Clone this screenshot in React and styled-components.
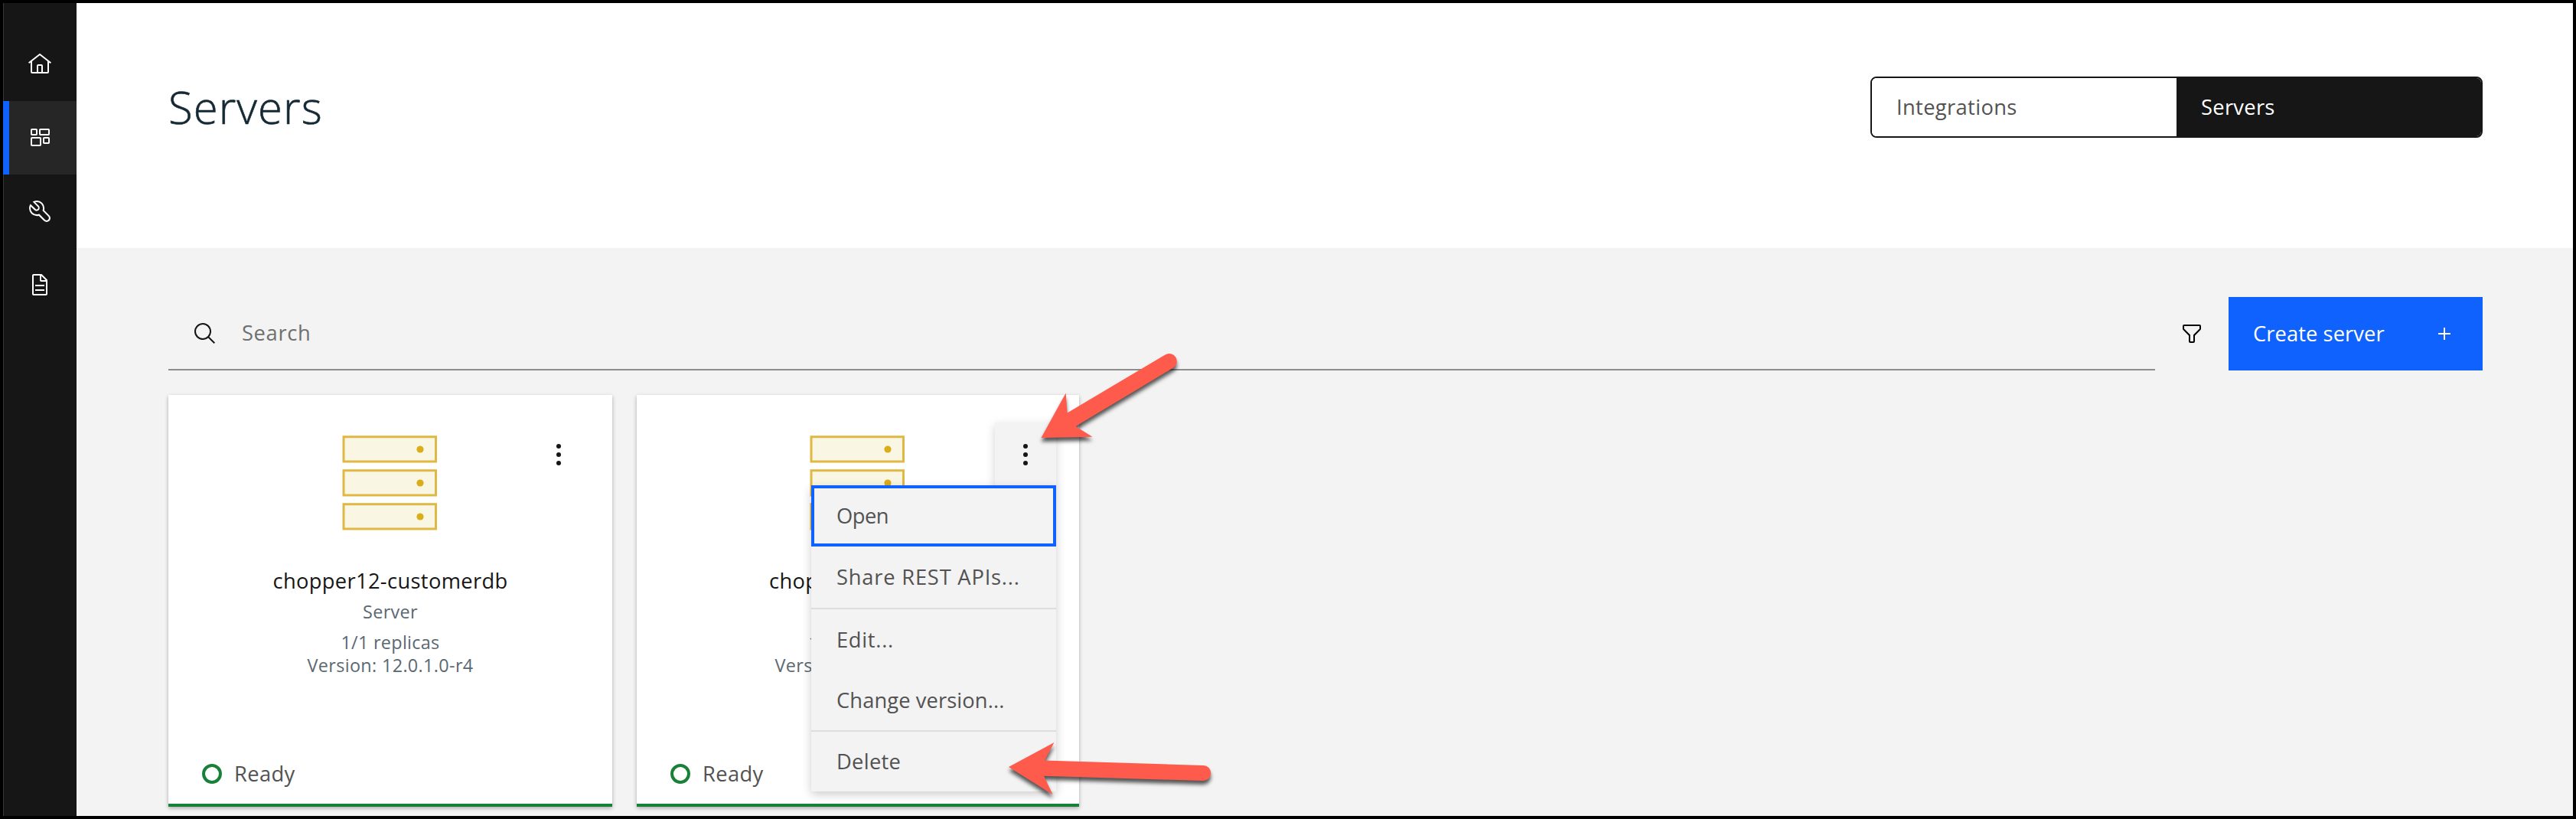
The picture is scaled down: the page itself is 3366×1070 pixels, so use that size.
import React from "react";
import styled, { createGlobalStyle, css } from "styled-components";

const GlobalStyle = createGlobalStyle`
  *, *::before, *::after { box-sizing: border-box; }
  body { margin: 0; background: #000; }
  button { border: 0; margin: 0; padding: 0; background: none; font: inherit; text-align: left; }
`;

/* Shell */

const Frame = styled.div`
  position: relative;
  display: flex;
  width: 3366px;
  height: 1070px;
  border: 4px solid #000;
  overflow: hidden;
  background: #f3f3f3;
  color: #161616;
  font-family: "Open Sans", "Noto Sans", sans-serif;
  font-size: 27.3px;
  line-height: 36px;
`;

const Sidebar = styled.nav`
  flex: none;
  width: 96px;
  padding-top: 32px;
  background: #161616;
  box-shadow: inset 1px 0 0 #393939;
`;

const SidebarItem = styled.a`
  display: flex;
  align-items: center;
  justify-content: center;
  height: 96px;
  color: #fff;
  ${(p) =>
    p.$active &&
    css`
      background: #262626;
      box-shadow: inset 8px 0 0 #0f62fe;
    `}
`;

const Main = styled.main`
  flex: 1;
  display: flex;
  flex-direction: column;
`;

const Icon = styled.svg`
  display: block;
  flex: none;
  width: 32px;
  height: 32px;
  fill: currentColor;
`;

const Label = styled.span`
  letter-spacing: ${(p) => p.$track || 0}px;
  white-space: nowrap;
`;

/* Header */

const Header = styled.header`
  display: flex;
  align-items: flex-start;
  justify-content: space-between;
  height: 320px;
  padding: 96px 118px 0 120px;
  background: #fff;
`;

const Title = styled.h1`
  margin: 0;
  color: #152935;
  font-size: 58px;
  font-weight: 300;
  line-height: 79px;
  letter-spacing: 1.1px;
  -webkit-text-stroke: 0.6px #152935;
`;

const Switcher = styled.div`
  display: flex;
  width: 800px;
  height: 80px;
  border: 2px solid #161616;
  border-radius: 8px;
  overflow: hidden;
`;

const SwitcherTab = styled.button`
  flex: 1;
  padding: 0 0 1px 32px;
  background: ${(p) => (p.$selected ? "#161616" : "#fff")};
  color: ${(p) => (p.$selected ? "#fff" : "#525252")};
`;

/* Toolbar */

const Content = styled.section`
  flex: 1;
  padding: 64px 118px 0 120px;
`;

const Toolbar = styled.div`
  display: flex;
  height: 96px;
`;

const SearchField = styled.div`
  flex: 1;
  display: flex;
  align-items: center;
  gap: 32px;
  padding-left: 32px;
  border-bottom: 2px solid #8d8d8d;
  color: #6f6f6f;

  ${Icon} {
    color: #161616;
    margin-top: 2px;
  }
`;

const FilterButton = styled.button`
  display: flex;
  align-items: center;
  justify-content: center;
  width: 96px;
`;

const CreateButton = styled.button`
  display: flex;
  align-items: center;
  justify-content: space-between;
  width: 332px;
  padding: 0 34px 0 32px;
  background: #0f62fe;
  color: #fff;
`;

/* Cards */

const CardList = styled.div`
  display: flex;
  gap: 32px;
  margin-top: 32px;
`;

const Card = styled.article`
  position: relative;
  display: flex;
  flex-direction: column;
  align-items: center;
  width: ${(p) => p.$width}px;
  height: 538px;
  padding-top: 52px;
  border-bottom: 4px solid #198038;
  background: #fff;
  box-shadow: 0 2px 5px rgba(0, 0, 0, 0.3);
`;

const ServerArt = styled.svg`
  display: block;
  width: 126px;
  height: 126px;
  fill: #faf6e4;
  stroke: #dfb943;
  stroke-width: 3;
`;

const CardName = styled.h2`
  margin: 47px 0 0;
  font-size: inherit;
  font-weight: 400;
  line-height: 36px;
`;

const CardMeta = styled.p`
  margin: ${(p) => p.$gap || 0}px 0 0;
  color: #5a6872;
  font-size: 23.4px;
  line-height: 30px;
`;

const Status = styled.div`
  display: flex;
  align-items: center;
  align-self: stretch;
  gap: 16px;
  margin-top: auto;
  padding: 0 0 21px 44px;
  color: #525252;
`;

const StatusRing = styled.span`
  width: 26px;
  height: 26px;
  border: 4px solid #198038;
  border-radius: 50%;
`;

const OverflowButton = styled.button`
  position: absolute;
  top: 36px;
  right: 30px;
  width: 80px;
  height: 84px;
  ${(p) =>
    p.$open &&
    css`
      background: #f3f3f3;
      box-shadow: 0 4px 12px rgba(0, 0, 0, 0.18);
    `}
`;

const Dots = styled.svg`
  display: block;
  width: 80px;
  height: 84px;
  fill: #161616;
`;

const Menu = styled.div`
  position: absolute;
  top: 118px;
  right: 30px;
  width: 320px;
  background: #f3f3f3;
  box-shadow: 0 4px 12px rgba(0, 0, 0, 0.2);
`;

const MenuItem = styled.button`
  display: flex;
  align-items: center;
  width: 100%;
  height: ${(p) => p.$height}px;
  padding: 0 0 1px 33px;
  border-top: ${(p) => (p.$divided ? "2px solid #dedede" : "0")};
  color: #525252;
  box-shadow: ${(p) => (p.$focused ? "inset 0 0 0 4px #0f62fe" : "none")};

  &:last-child {
    padding-bottom: 0;
  }
`;

/* Annotations laid over the page */

const Arrow = styled.svg`
  position: absolute;
  left: ${(p) => p.$x}px;
  top: ${(p) => p.$y}px;
  fill: #ff5b4c;
  filter: drop-shadow(0 5px 2.5px rgba(0, 0, 0, 0.65));
  overflow: visible;
`;

const HomeIcon = () => (
  <Icon viewBox="0 0 32 32">
    <path d="M16.6123,2.2138a1.01,1.01,0,0,0-1.2427,0L1,13.4194l1.2427,1.5717L4,13.6208V26a2.0041,2.0041,0,0,0,2,2H26a2.0037,2.0037,0,0,0,2-2V13.63L29.7573,15,31,13.4282ZM18,26H14V18h4Zm2,0V18a2.0023,2.0023,0,0,0-2-2H14a2.002,2.002,0,0,0-2,2v8H6V12.0615l10-7.79,10,7.8005V26Z" />
  </Icon>
);

const DashboardIcon = () => (
  <Icon viewBox="0 0 32 32">
    <g fill="none" stroke="currentColor" strokeWidth="2">
      <rect x="5" y="5" width="7" height="7" rx="0.8" />
      <rect x="16" y="5" width="12" height="7" rx="0.8" />
      <rect x="5" y="16" width="12" height="10" rx="0.8" />
      <rect x="21" y="16" width="7" height="7" rx="0.8" />
    </g>
  </Icon>
);

const WrenchIcon = () => (
  <Icon viewBox="0 0 32 32">
    <path d="M12.1,2a9.8,9.8,0,0,0-5.4,1.6l6.4,6.4a2.1,2.1,0,0,1,.2,3,2.1,2.1,0,0,1-3-.2L3.7,6.4A9.84,9.84,0,0,0,2,12.1,10.14,10.14,0,0,0,12.1,22.2a10.9,10.9,0,0,0,2.6-.3l6.7,6.7a5,5,0,0,0,7.1-7.1l-6.7-6.7a10.9,10.9,0,0,0,.3-2.6A10,10,0,0,0,12.1,2Zm8,10.1a7.61,7.61,0,0,1-.3,2.1l-.3,1.1.8.8,6.7,6.7a2.88,2.88,0,0,1,.9,2.1A2.72,2.72,0,0,1,27,27a2.9,2.9,0,0,1-4.2,0l-6.7-6.7-.8-.8-1.1.3a7.61,7.61,0,0,1-2.1.3,8.27,8.27,0,0,1-5.7-2.3A7.63,7.63,0,0,1,4,12.1a8.33,8.33,0,0,1,.3-2.2l4.4,4.4a4.14,4.14,0,0,0,5.9.2,4.14,4.14,0,0,0-.2-5.9L10,4.2a6.45,6.45,0,0,1,2-.3,8.27,8.27,0,0,1,5.7,2.3A8.49,8.49,0,0,1,20.1,12.1Z" />
  </Icon>
);

const DocumentIcon = () => (
  <Icon viewBox="0 0 32 32">
    <path d="M25.7,9.3l-7-7C18.5,2.1,18.3,2,18,2H8C6.9,2,6,2.9,6,4v24c0,1.1,0.9,2,2,2h16c1.1,0,2-0.9,2-2V10C26,9.7,25.9,9.5,25.7,9.3z M18,4.4l5.6,5.6H18V4.4z M24,28H8V4h8v6c0,1.1,0.9,2,2,2h6V28z" />
    <rect x="10" y="22" width="12" height="2" />
    <rect x="10" y="16" width="12" height="2" />
  </Icon>
);

const SearchIcon = () => (
  <Icon viewBox="0 0 32 32">
    <path d="M29,27.5859l-7.5521-7.5521a11.0177,11.0177,0,1,0-1.4141,1.4141L27.5859,29ZM4,13a9,9,0,1,1,9,9A9.01,9.01,0,0,1,4,13Z" />
  </Icon>
);

const FilterIcon = () => (
  <Icon viewBox="0 0 32 32">
    <path d="M18,28H14a2,2,0,0,1-2-2V18.41L4.59,11A2,2,0,0,1,4,9.59V6A2,2,0,0,1,6,4H26a2,2,0,0,1,2,2V9.59A2,2,0,0,1,27.41,11L20,18.41V26A2,2,0,0,1,18,28ZM6,6V9.59l8,8V26h4V17.59l8-8V6Z" />
  </Icon>
);

const AddIcon = () => (
  <Icon viewBox="0 0 32 32">
    <path d="M17 15V8H15v7H8v2h7v7h2v-7h7v-2z" />
  </Icon>
);

const menuItems = [
  { text: "Open", height: 80, track: -0.5, focused: true },
  { text: "Share REST APIs...", height: 80, track: 0.8 },
  { text: "Edit...", height: 82, track: 0.7, divided: true },
  { text: "Change version...", height: 78, track: 0.1 },
  { text: "Delete", height: 80, track: 0.3, divided: true },
];

function ServerCard({ name, width, menuOpen }) {
  return (
    <Card $width={width}>
      <ServerArt viewBox="0 0 126 126">
        {[0, 44, 88].map((y) => (
          <g key={y}>
            <rect x="2" y={y + 2.7} width="120.5" height="32.3" />
            <circle cx="102" cy={y + 19} r="4.6" fill="#d9ae18" stroke="none" />
          </g>
        ))}
      </ServerArt>
      <CardName>
        <Label $track={0.34}>{name}</Label>
      </CardName>
      <CardMeta $gap={7}>
        <Label $track={0.34}>Server</Label>
      </CardMeta>
      <CardMeta $gap={10}>
        <Label $track={0.3}>1/1 replicas</Label>
      </CardMeta>
      <CardMeta>
        <Label $track={0.35}>Version: 12.0.1.0-r4</Label>
      </CardMeta>
      <Status>
        <StatusRing />
        <Label $track={0.37}>Ready</Label>
      </Status>
      <OverflowButton $open={menuOpen} aria-label="Options">
        <Dots viewBox="0 0 80 84">
          <circle cx="40" cy="31" r="3" />
          <circle cx="40" cy="42" r="3" />
          <circle cx="40" cy="53" r="3" />
        </Dots>
      </OverflowButton>
      {menuOpen && (
        <Menu>
          {menuItems.map((m) => (
            <MenuItem key={m.text} $height={m.height} $divided={m.divided} $focused={m.focused}>
              <Label $track={m.track}>{m.text}</Label>
            </MenuItem>
          ))}
        </Menu>
      )}
    </Card>
  );
}

export default function App() {
  return (
    <>
      <GlobalStyle />
      <Frame>
        <Sidebar>
          <SidebarItem><HomeIcon /></SidebarItem>
          <SidebarItem $active><DashboardIcon /></SidebarItem>
          <SidebarItem><WrenchIcon /></SidebarItem>
          <SidebarItem><DocumentIcon /></SidebarItem>
        </Sidebar>
        <Main>
          <Header>
            <Title>Servers</Title>
            <Switcher>
              <SwitcherTab><Label $track={0.36}>Integrations</Label></SwitcherTab>
              <SwitcherTab $selected><Label $track={0.3}>Servers</Label></SwitcherTab>
            </Switcher>
          </Header>
          <Content>
            <Toolbar>
              <SearchField>
                <SearchIcon />
                <Label $track={0.65}>Search</Label>
              </SearchField>
              <FilterButton aria-label="Filter"><FilterIcon /></FilterButton>
              <CreateButton>
                <Label $track={0.08}>Create server</Label>
                <AddIcon />
              </CreateButton>
            </Toolbar>
            <CardList>
              <ServerCard name="chopper12-customerdb" width={580} />
              <ServerCard name="chopper12-mqapi" width={578} menuOpen />
            </CardList>
          </Content>
        </Main>
        <Arrow $x={1346} $y={446} width="200" height="140" viewBox="1350 450 200 140">
          <path d="M1360.5 572L1392.7 513.5L1394.5 539.5L1522.5 463.5A10 10 0 0 1 1533 480.6L1405.5 557L1427.5 570.7Z" />
        </Arrow>
        <Arrow $x={1306} $y={956} width="290" height="90" viewBox="1310 960 290 90">
          <path d="M1318 1002L1377.5 970L1365 993.5L1572.5 1000A10 10 0 0 1 1572 1020L1364 1013.7L1375.5 1038Z" />
        </Arrow>
      </Frame>
    </>
  );
}
